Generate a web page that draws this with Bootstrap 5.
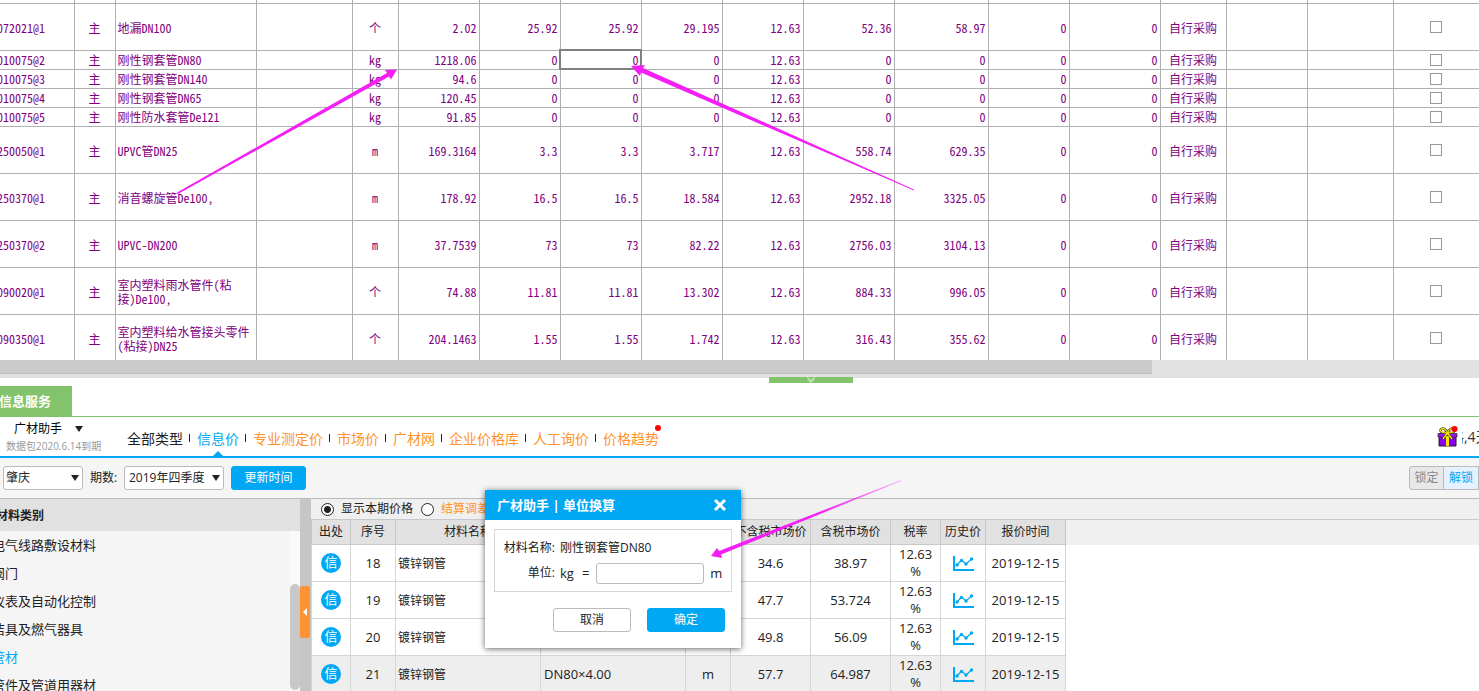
<!DOCTYPE html>
<html lang="zh-CN">
<head>
<meta charset="utf-8">
<meta name="viewport" content="width=device-width, initial-scale=1">
<title>广材助手</title>
<link href="https://cdn.jsdelivr.net/npm/bootstrap@5.3.0/dist/css/bootstrap.min.css" rel="stylesheet">
<style>
body{font:12px/16px "Open Sans","Noto Sans CJK SC",sans-serif;color:#222;background:#fff}
a{text-decoration:none;color:inherit}
th{font-weight:400}
.grid-wrap{height:360px}
.bill{table-layout:fixed;width:100%;border-collapse:collapse;font:12px/14px "Noto Sans Mono CJK SC",monospace;color:#800080}
.bill td{border:1px solid #b0b0b0;border-top:0;height:19px;padding:1px 2px 0;text-align:right;vertical-align:middle;white-space:nowrap;overflow:hidden}
.bill tr.tall td{height:47px;padding-top:2px}
.bill tr.cut td{height:3px;padding:0}
.bill td.mid{text-align:center}
.bill td.title{text-align:left;white-space:normal;padding-left:2px;padding-right:0}
.bill td.code{text-align:left;text-indent:-3px;padding-left:0;border-left:0;overflow:visible}
.bill td:first-child{border-left:0}
.bill td:last-child{border-right:0}
.bill tr.tall td.last,.bill td.last{padding:0;text-align:center}
.bill td.picked{outline:2px solid #808080;outline-offset:-1px}
.tick{appearance:none;display:block;width:12px;height:12px;margin:0 auto;border:1px solid #999;background:#fff}
.scroll-track{height:18px;background:#e1e1e1}
.scroll-thumb{height:14px;width:77.9%;background:#cbcbcb;border-bottom:1px solid #bfbfbf;border-radius:0 2px 2px 0}
.fold{left:52%;bottom:-5px;width:84px;height:6px;background:#82c36c;border:0;padding:0}
.tabs-row{height:39px;border-bottom:1px solid #82c36c}
.tab-on{width:72px;height:30px;background:#82c36c;color:#fff;font-weight:700;font-size:13px;line-height:31px;text-indent:-1px}
.menu-row{height:41px;border-bottom:2px solid #00a8f3}
.brand-box{width:127px}
.brand-box button{border:0;background:none;padding:0 0 0 14px;font-size:12px;line-height:18px;color:#000}
.brand-box .caret{margin-left:13px}
.brand-box small{font-size:10px;line-height:16px;color:#999;padding-left:6px}
.caret{display:inline-block;border:4px solid transparent;border-top:6px solid #222;border-bottom:0}
.cats{font-size:14px;line-height:20px;color:#ff9329}
.cats a+a::before{content:"";display:inline-block;width:1px;height:8px;background:#222;margin:0 7px 2px 6px}
.cats .black{color:#222}.cats .on{color:#00a8f3}
.on-mark{left:53%;bottom:-7px;border:5px solid transparent;border-bottom:5px solid #00a8f3;border-top:0}
.dot{width:6px;height:6px;margin:-4px -2px;border-radius:50%;background:red}
.notice{width:17px;font-size:14px;line-height:20px;text-indent:-12px;color:#333}
.tool-row{height:41px;background:#f5f5f5;border-bottom:1px solid #bbb;padding:0 0 0 3px}
.pick{appearance:none;height:24px;border:1px solid #bbb;border-radius:3px;background:#fff;padding:0 2px;color:#222;font-size:12px;line-height:20px;width:100%}
.pick-wrap{width:100px}
.pick-wrap.area{width:80px}
.pick-wrap .caret{right:4px;top:9px;pointer-events:none}
.term-lab{width:27px;margin:0 7px;white-space:nowrap}
.refresh{width:75px;margin-left:7px}
.act{height:24px;border:1px solid #00a8f3;border-radius:3px;background:#00a8f3;color:#fff;font-size:12px;line-height:22px;padding:0;text-align:center}
.act.plain{background:#fff;border-color:#bbb;color:#222}
.lock button{height:24px;width:35px;border:1px solid #bbb;background:#e8e8e8;color:#888;padding:0;font-size:12px;line-height:22px}
.lock button:first-child{border-radius:3px 0 0 3px}
.lock button+button{border-left:0;background:#e6f1ff;color:#00a8f3}
.side{width:300px;background:#f5f5f5}
.side h2{height:32px;font-size:12px;font-weight:700;line-height:34px;background:#e1e1e1;margin:0;text-indent:-4px}
.side li{font-size:13px;line-height:28px;text-indent:-8px}
.side .on{color:#00a8f3}
.side-bar{width:10px;background:#fafafa}
.side-thumb{margin-top:53px;height:106px;background:#c8c8c8;border-radius:5px}
.gutter{width:11px;background:#c8c6c4}
.gutter button{position:absolute;left:0;top:87px;width:10px;height:52px;border:0;border-radius:2px;background:#ff9232;padding:0}
.mode{height:20px;background:#f0f0f0;padding-left:10px}
.mode input{appearance:none;width:13px;height:13px;border:1px solid #222;border-radius:50%;margin:0;background:#fff}
.mode input:checked{background:radial-gradient(circle,#222 3px,#fff 4px)}
.mode label{padding:0 8px 0 7px}
.orange{color:#ff9329}
.price{table-layout:fixed;width:100%;border-collapse:collapse;font-size:13px}
.price th{height:25px;background:#e1e1e1;border:1px solid #c8c8c8;font-size:12px;text-align:center;padding:0;white-space:nowrap}
.price td{height:37px;border:1px solid #d6d6d6;text-align:center;padding:0 2px;line-height:17px}
.price td.nm{text-align:left;font-size:12px}
.price td.sp{text-align:left;padding-left:3px}
.price th.rest{background:#f0f0f0;border-width:1px 0 0}
.price td.rest{background:#fff;border:0}
.price tr.sel td:not(.rest){background:#eee}
.price .pct{padding:0 8px}
.xin{width:20px;height:20px;border-radius:50%;background:#00a8f3;color:#fff;font-size:13px;line-height:19px;display:block;margin:0 auto}
.dlg{left:485px;top:490px;width:256px;height:158px;background:#fff;box-shadow:0 1px 6px rgba(0,0,0,.6)}
.dlg header{height:30px;background:#00a8f3;color:#fff;font-size:13px;font-weight:700;padding:0 14px 0 12px}
.dlg header button{border:0;background:none;padding:0;line-height:0}
.dlg fieldset{margin:9px 9px 16px;height:63px;border:1px solid #d6d6d6;padding:8px 8px 0}
.dlg label,.dlg .lab{width:52px;text-align:right;flex:none}
.dlg .line1{line-height:20px}
.dlg .line2{height:24px;margin-top:3px}
.dlg .val{padding-left:5px}
.dlg input{width:108px;height:21px;border:1px solid #bbb;border-radius:3px;margin:0 6px 0 7px}
.dlg .act{width:78px}
.s13{font-size:13px}
.notes{left:0;top:0;pointer-events:none}
</style>
</head>
<body class="vh-100 d-flex flex-column overflow-hidden position-relative">
<div class="grid-wrap overflow-hidden flex-shrink-0">
<table class="bill"><colgroup id="billCols"></colgroup><tbody id="billRows"></tbody></table>
</div>
<div class="scroll-track position-relative flex-shrink-0">
  <div class="scroll-thumb"></div>
  <button class="fold position-absolute d-flex justify-content-center" aria-label="收起"><svg width="10" height="6" fill="none" stroke="#e4f4dd" stroke-width="1"><path d="M1 0L5 3.500L9 0M2 2.500L5 5.500L8 2.500"/></svg></button>
</div>
<div class="tabs-row d-flex align-items-end flex-shrink-0"><a href="#" class="tab-on">信息服务</a></div>
<div class="menu-row d-flex align-items-center flex-shrink-0">
  <div class="brand-box d-flex flex-column"><button class="d-flex align-items-center">广材助手<span class="caret"></span></button><small>数据包2020.6.14到期</small></div>
  <nav class="cats d-flex pt-1">
    <a href="#" class="black">全部类型</a><a href="#" class="on position-relative">信息价<span class="on-mark position-absolute"></span></a><a href="#">专业测定价</a><a href="#">市场价</a><a href="#">广材网</a><a href="#">企业价格库</a><a href="#">人工询价</a><a href="#" class="position-relative">价格趋势<span class="dot position-absolute top-0 end-0"></span></a>
  </nav>
  <div class="ms-auto d-flex align-items-center">
    <svg class="me-1" width="21" height="21" viewBox="0 0 21 21"><path d="M2 8h17v12H2z" fill="#8a00f0" stroke="#222"/><path d="M1 7.500h19v3.500H1z" fill="#9b14ff" stroke="#333" stroke-width=".8"/><path d="M9 8h3v12H9z" fill="#ffe600"/><path d="M10.500 7L5.500 13.500M10.500 7L15.500 13.500M10.500 7Q2 7 4 3Q8 1 10.500 7Q13 1 17 3Q19 7 10.500 7" fill="none" stroke="#333" stroke-width="2.500"/><path d="M10.500 7L6 13M10.500 7L15 13M10.500 7Q2 7 4 3Q8 1 10.500 7Q13 1 17 3Q19 7 10.500 7" fill="none" stroke="#ffe600" stroke-width="1.300"/><path d="M5 3.500L8 5.500L5.500 6ZM13 5.500L16 3.500L15.500 6Z" fill="#fff"/><circle cx="17.500" cy="3" r="3" fill="red"/></svg>
    <div class="notice overflow-hidden text-nowrap">格,4天</div>
  </div>
</div>
<div class="tool-row d-flex align-items-center flex-shrink-0">
  <div class="pick-wrap area position-relative"><select class="pick" aria-label="地区"><option>肇庆</option></select><span class="caret position-absolute"></span></div>
  <label class="term-lab" for="term">期数:</label>
  <div class="pick-wrap position-relative"><select class="pick ps-1" id="term"><option>2019年四季度</option></select><span class="caret position-absolute"></span></div>
  <button class="act refresh">更新时间</button>
  <div class="lock ms-auto d-flex"><button>锁定</button><button>解锁</button></div>
</div>
<div class="d-flex flex-grow-1 overflow-hidden">
  <aside class="side flex-shrink-0">
    <h2>材料类别</h2>
    <div class="d-flex h-100">
      <ul class="list-unstyled flex-grow-1 m-0 overflow-hidden">
        <li><a href="#">电气线路敷设材料</a></li><li><a href="#">阀门</a></li><li><a href="#">仪表及自动化控制</a></li><li><a href="#">洁具及燃气器具</a></li><li><a href="#" class="on">管材</a></li><li><a href="#">管件及管道用器材</a></li>
      </ul>
      <div class="side-bar"><div class="side-thumb"></div></div>
    </div>
  </aside>
  <div class="gutter position-relative flex-shrink-0"><button aria-label="收起分类"><svg class="d-block mx-auto" width="4" height="8"><path d="M4 0v8L0 4z" fill="#fff"/></svg></button></div>
  <main class="flex-grow-1 overflow-hidden">
    <div class="mode d-flex align-items-center"><input type="radio" name="mode" id="m1" checked><label for="m1">显示本期价格</label><input type="radio" name="mode" id="m2"><label for="m2" class="orange">结算调差</label></div>
    <table class="price"><colgroup id="priceCols"></colgroup>
      <thead><tr><th>出处</th><th>序号</th><th>材料名称</th><th>规格型号</th><th>单位</th><th>不含税市场价</th><th>含税市场价</th><th>税率</th><th>历史价</th><th>报价时间</th><th class="rest"></th></tr></thead>
      <tbody id="priceRows"></tbody></table>
  </main>
</div>
<section class="dlg position-absolute" role="dialog" aria-label="单位换算">
  <header class="d-flex align-items-center justify-content-between">广材助手 | 单位换算<button aria-label="关闭"><svg width="14" height="14" stroke="#fff" stroke-width="3"><path d="M2 2L12 12M12 2L2 12"/></svg></button></header>
  <fieldset>
    <div class="d-flex line1"><span class="lab">材料名称:</span><span class="val text-nowrap">刚性钢套管DN80</span></div>
    <div class="d-flex align-items-center line2"><label for="rate">单位:</label><span class="val s13">kg</span><span class="ps-2 s13">=</span><input id="rate" type="text"><span class="s13">m</span></div>
  </fieldset>
  <div class="d-flex justify-content-end gap-3 pe-3"><button class="act plain">取消</button><button class="act">确定</button></div>
</section>
<svg class="notes position-absolute" width="940" height="570" fill="#f41ff4">
  <defs><linearGradient id="fade" gradientUnits="userSpaceOnUse" x1="900" y1="480" x2="820" y2="515"><stop stop-color="#f41ff4" stop-opacity=".3"/><stop offset="1" stop-color="#f41ff4"/></linearGradient></defs>
  <path d="M177 192.500L387 73L385 70L397 69.500L391 79.500L389 76.500L178 194Z"/>
  <path d="M914 190.500L914 189.500L643 68L645 65L631 66L640 76L641 72.500Z"/>
  <path d="M901 481L901 480L719 551L717 548L711 556L722 558L721 554.500Z" fill="url(#fade)"/>
</svg>
<script>
const cols = n => n.map(w => `<col${w ? ` style="width:${w}px"` : ''}>`).join('');
billCols.innerHTML = cols([74,41,141,96,46,81,81,81,81,81,91,94,81,91,66,81,86,0]);
const bill = [
 ['072021@1','地漏DN100','个','2.02','25.92','25.92','29.195','52.36','58.97',1],
 ['010075@2','刚性钢套管DN80','kg','1218.06','0','0','0','0','0',0],
 ['010075@3','刚性钢套管DN140','kg','94.6','0','0','0','0','0',0],
 ['010075@4','刚性钢套管DN65','kg','120.45','0','0','0','0','0',0],
 ['010075@5','刚性防水套管De121','kg','91.85','0','0','0','0','0',0],
 ['250050@1','UPVC管DN25','m','169.3164','3.3','3.3','3.717','558.74','629.35',1],
 ['250370@1','消音螺旋管De100,','m','178.92','16.5','16.5','18.584','2952.18','3325.05',1],
 ['250370@2','UPVC-DN200','m','37.7539','73','73','82.22','2756.03','3104.13',1],
 ['090020@1','室内塑料雨水管件(粘<br>接)De100,','个','74.88','11.81','11.81','13.302','884.33','996.05',1],
 ['090350@1','室内塑料给水管接头零件<br>(粘接)DN25','个','204.1463','1.55','1.55','1.742','316.43','355.62',1]];
billRows.innerHTML = '<tr class="cut">' + '<td></td>'.repeat(18) + '</tr>' + bill.map((r, i) =>
 `<tr class="${r[9] ? 'tall' : ''}"><td class="code">${r[0]}</td><td class="mid">主</td><td class="title">${r[1]}</td><td></td><td class="mid">${r[2]}</td><td>${r[3]}</td><td>${r[4]}</td><td class="${i == 1 ? 'picked' : ''}">${r[5]}</td><td>${r[6]}</td><td>12.63</td><td>${r[7]}</td><td>${r[8]}</td><td>0</td><td>0</td><td class="mid">自行采购</td><td></td><td></td><td class="last"><input type="checkbox" class="tick" aria-label="选择"></td></tr>`).join('');
priceCols.innerHTML = cols([39,45,145,145,45,80,80,50,45,80,0]);
const chart = '<svg width="21" height="16" fill="none" stroke="#00a8f3"><path d="M1 0V14H21" stroke-width="2"/><path d="M4 9L8.500 4L13 8L18.500 3" stroke-width="1.200"/><g fill="#00a8f3" stroke="none"><circle cx="4" cy="9" r="1.700"/><circle cx="8.500" cy="4.500" r="1.700"/><circle cx="13" cy="8" r="1.700"/><circle cx="18.500" cy="3" r="1.700"/></g></svg>';
priceRows.innerHTML = [[18,'','34.6','38.97'],[19,'','47.7','53.724'],[20,'','49.8','56.09'],[21,'DN80×4.00','57.7','64.987']].map(r =>
 `<tr class="${r[0] == 21 ? 'sel' : ''}"><td><span class="xin">信</span></td><td>${r[0]}</td><td class="nm">镀锌钢管</td><td class="sp">${r[1]}</td><td>m</td><td>${r[2]}</td><td>${r[3]}</td><td class="pct">12.63<br>%</td><td>${chart}</td><td>2019-12-15</td><td class="rest"></td></tr>`).join('');
</script>
<script src="https://cdn.jsdelivr.net/npm/bootstrap@5.3.0/dist/js/bootstrap.bundle.min.js"></script>
</body>
</html>
